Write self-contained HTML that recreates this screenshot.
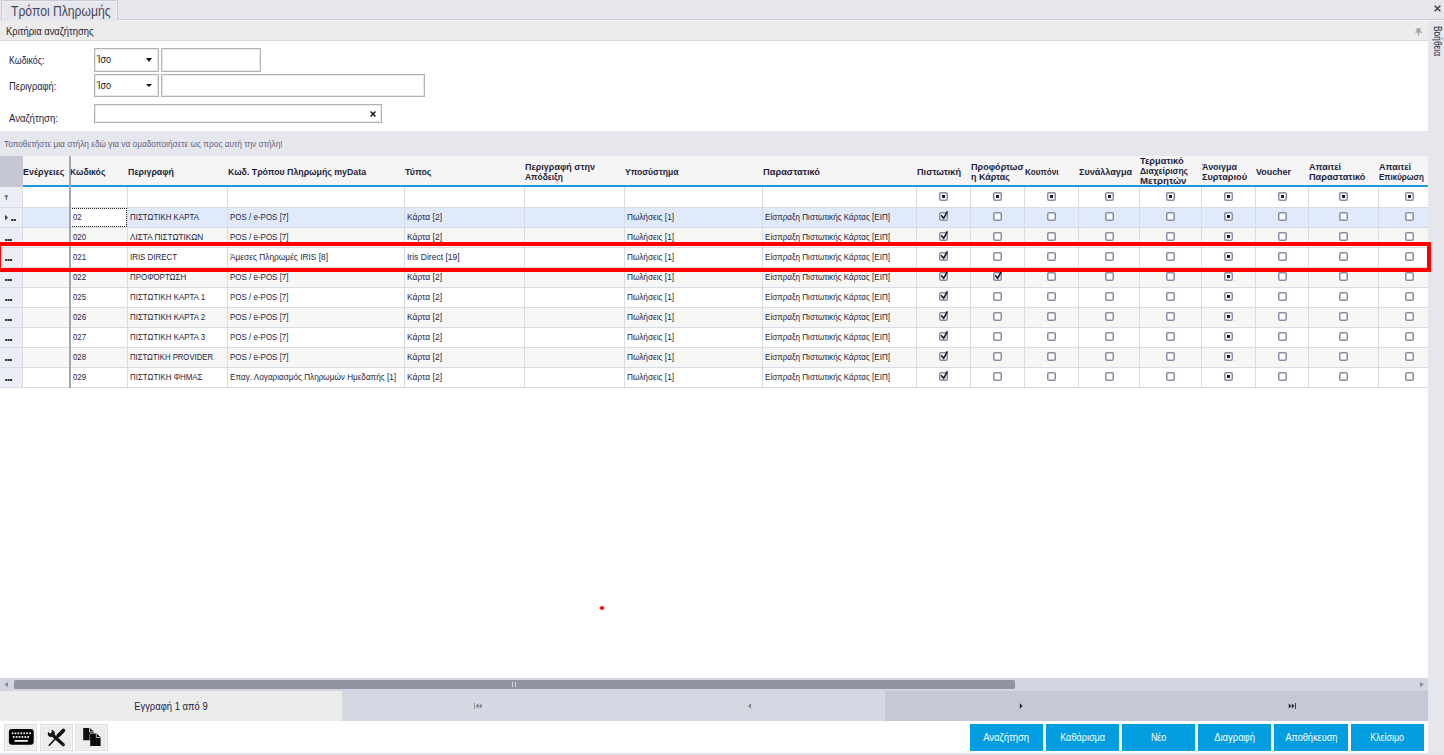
<!DOCTYPE html><html lang="el"><head><meta charset="utf-8"><title>Τρόποι Πληρωμής</title><style>*{box-sizing:border-box;margin:0;padding:0}
html,body{width:1444px;height:755px;overflow:hidden;background:#e6e7ec;font-family:"Liberation Sans",sans-serif;font-size:9px;color:#1e1e3c}
body{position:relative}
.t{display:inline-block;transform-origin:left center;white-space:nowrap}
#tabstrip{position:absolute;left:0;top:0;width:1444px;height:21px;background:#e6e7ec}
#tabstrip .l1{position:absolute;left:0;top:19px;width:1444px;height:1px;background:#c9cbd6}
#tabstrip .l2{position:absolute;left:0;top:20px;width:1444px;height:1px;background:#fafafb}
#tab{position:absolute;left:1px;top:0;width:117px;height:21px;background:#e6e7ec;border:1px solid #c9cbd6;border-bottom:none;box-shadow:inset 1px 1px 0 #eeeff3,inset -1px 0 0 #eeeff3;font-size:14px;line-height:20px;padding-left:9px;color:#46465c;white-space:nowrap}
#closex{position:absolute;left:1434px;top:5px;width:7px;height:7px}
#crit{position:absolute;left:0;top:21px;width:1428px;height:20px;background:#ececea;border-bottom:1px solid #d5d7e0;line-height:21px;padding-left:6px;font-size:10px;color:#1e1e3c}
#critbody{position:absolute;left:0;top:41px;width:1428px;height:90px;background:#fff}
#help{position:absolute;left:1428px;top:21px;width:16px;height:734px;background:#e6e7ec}
#help span.v{position:absolute;left:4px;top:5px;width:10px;height:31px;writing-mode:vertical-rl;font-size:10px;color:#1e1e3c;white-space:nowrap;line-height:10px}
#help span.v .t{transform-origin:center top}
.lbl{position:absolute;font-size:10.5px;line-height:12px;color:#1e1e3c;white-space:nowrap}
.box{position:absolute;background:#fff;border:1px solid #b2b2b2;box-shadow:inset 0 0 0 1px #e8e8e8;font-size:10.5px;line-height:20px;padding-left:2px;color:#111}
.dd{position:absolute;width:0;height:0;border-left:3px solid transparent;border-right:3px solid transparent;border-top:3px solid #111}
#grp{position:absolute;left:0;top:131px;width:1428px;height:25px;background:#e6e7ec;font-size:8.5px;color:#5e6184;line-height:27px;padding-left:4px;white-space:nowrap}
#grid{position:absolute;left:0;top:156px;width:1428px;height:522px;background:#fff;overflow:hidden}
.hdr{position:absolute;left:0;top:0;width:1428px;height:31px;background:#f5f5f5;border-bottom:2px solid #1a9be0;overflow:hidden}
.hc{position:absolute;top:1px;height:30px;font-weight:bold;font-size:9px;color:#1e1e3c;display:flex;align-items:center;padding-left:0;line-height:10px;white-space:nowrap;overflow:hidden}
.hc.n3{top:-1px;height:32px;padding-top:0}
.hc.first{padding-left:0}
.hc.ind{background:#c5c7d3;height:31px;top:0;z-index:2}
.row{position:absolute;left:0;width:1428px;height:20px;background:#fff;border-bottom:1px solid #d9dbe4}
.row.alt{background:#f6f6f4}
.row.sel{background:#e1eafb}
.c{position:absolute;top:0;height:19px;border-left:1px solid #d9dbe4;line-height:19px;padding-left:2px;white-space:nowrap;overflow:hidden;font-size:9px;color:#1e1e3c}
.ci{position:absolute;left:0;top:0;width:22px;height:19px;background:#eceef5}
.c.k{padding-left:0}
.c.foc{background:#fff;outline:1px dotted #222;outline-offset:-1px}
.cb{display:block;position:absolute;left:50%;top:2.4px;width:11px;height:13px;margin-left:-5.5px}
.ci svg{position:absolute;left:0;top:0}
.sep{position:absolute;left:69px;top:0;width:2px;height:232px;background:#a3a5b5}
#redbox{position:absolute;left:-3px;top:242px;width:1434px;height:30px;border:4px solid #fe0000}
#hscroll{position:absolute;left:0;top:678px;width:1428px;height:13px;background:#d3d6e0}
#thumb{position:absolute;left:14px;top:2px;width:1001px;height:9px;background:#9195a1;border-radius:1.5px}
#nav{position:absolute;left:0;top:691px;width:1428px;height:30px;background:#ececea}
#nav .tt{position:absolute;left:0;top:0;width:342px;height:30px;text-align:center;line-height:30px;font-size:10.5px;color:#1e1e3c}
#nav .n1{position:absolute;left:342px;top:0;width:543px;height:30px;background:#d5d8e2}
#nav .n2{position:absolute;left:885px;top:0;width:543px;height:30px;background:#c6c8d5}
#tb{position:absolute;left:0;top:721px;width:1428px;height:32px;background:#fff}
.ib{position:absolute;top:3px;width:33px;height:27px;background:#ececea;box-shadow:inset 0 0 0 1px #dededc,inset 0 0 0 2px #f4f4f2}
.ib svg{position:absolute;left:0;top:0}
.bb{position:absolute;top:3px;width:73px;height:27px;background:#009de0;color:#fff;font-size:10px;text-align:center;line-height:27px;white-space:nowrap}
.bb .t,.tt .t{transform-origin:center center}
#botline{position:absolute;left:0;top:753px;width:1444px;height:2px;background:#e1e2e8}
.c.p3{padding-left:3px}
.row.flt{height:21px}
.row.flt .c{height:20px}
.row.flt .cb{top:3.4px}
.row.flt .ci{height:20px}
.row.flt .ci svg{top:1px}
</style></head><body>
<div id="tabstrip"><div class="l1"></div><div class="l2"></div><div id="tab"><span class="t" style="transform:scaleX(0.868)">Τρόποι Πληρωμής</span></div>
<svg id="closex" viewBox="0 0 7 7"><path d="M0.7 0.7 L6.3 6.3 M6.3 0.7 L0.7 6.3" stroke="#3c3c50" stroke-width="1.5" fill="none"/></svg></div>
<div id="crit"><span class="t" style="transform:scaleX(0.942)">Κριτήρια αναζήτησης</span>
<svg style="position:absolute;left:1415px;top:7px" width="7" height="8" viewBox="0 0 7 8"><path d="M1.5 0.3 H5.5 V3.5 H6.7 V4.7 H0.3 V3.5 H1.5 Z" fill="#9c9eb0"/><path d="M3.5 4.5 V7.7" stroke="#9c9eb0" stroke-width="1"/></svg></div>
<div id="critbody">
<div class="lbl" style="left:9px;top:12.8px"><span class="t" style="transform:scaleX(0.839)">Κωδικός:</span></div>
<div class="box" style="left:94px;top:7px;width:65px;height:24px"><span class="t" style="transform:scaleX(0.856)">Ίσο</span></div><div class="dd" style="left:146px;top:17px;border-top-width:4px"></div>
<div class="box" style="left:161px;top:7px;width:100px;height:24px"></div>
<div class="lbl" style="left:9px;top:38.6px"><span class="t" style="transform:scaleX(0.887)">Περιγραφή:</span></div>
<div class="box" style="left:94px;top:33px;width:65px;height:23px"><span class="t" style="transform:scaleX(0.856)">Ίσο</span></div><div class="dd" style="left:146px;top:43px"></div>
<div class="box" style="left:161px;top:33px;width:264px;height:23px"></div>
<div class="lbl" style="left:9px;top:71px"><span class="t" style="transform:scaleX(0.913)">Αναζήτηση:</span></div>
<div class="box" style="left:94px;top:63px;width:288px;height:19px"></div>
<svg style="position:absolute;left:370px;top:70px" width="6" height="6" viewBox="0 0 6 6"><path d="M0.6 0.6 L5.4 5.4 M5.4 0.6 L0.6 5.4" stroke="#111" stroke-width="1.4" fill="none"/></svg>
</div>
<div id="help"><span class="v"><span class="t" style="transform-origin:center top;transform:scaleY(0.837)">Βοήθεια</span></span></div>
<div id="grp"><span class="t" style="transform:scaleX(0.975)">Τοποθετήστε μια στήλη εδώ για να ομαδοποιήσετε ως προς αυτή την στήλη!</span></div>

<div id="grid">
<div class="hdr">
<div class="hc n1 first" style="left:23px;width:46px"><div><span class="t" style="transform:scaleX(1.003)">Ενέργειες</span></div></div>
<div class="hc n1" style="left:70px;width:57px"><div><span class="t" style="transform:scaleX(0.963)">Κωδικός</span></div></div>
<div class="hc n1" style="left:128px;width:99px"><div><span class="t" style="transform:scaleX(0.981)">Περιγραφή</span></div></div>
<div class="hc n1" style="left:228px;width:176px"><div><span class="t" style="transform:scaleX(0.976)">Κωδ. Τρόπου Πληρωμής myData</span></div></div>
<div class="hc n1" style="left:405px;width:119px"><div><span class="t" style="transform:scaleX(0.985)">Τύπος</span></div></div>
<div class="hc n2" style="left:525px;width:99px"><div><span class="t" style="transform:scaleX(0.999)">Περιγραφή στην</span><br><span class="t" style="transform:scaleX(0.935)">Απόδειξη</span></div></div>
<div class="hc n1" style="left:625px;width:137px"><div><span class="t" style="transform:scaleX(0.951)">Υποσύστημα</span></div></div>
<div class="hc n1" style="left:763px;width:153px"><div><span class="t" style="transform:scaleX(1.030)">Παραστατικό</span></div></div>
<div class="hc n1" style="left:917px;width:53px"><div><span class="t" style="transform:scaleX(1.016)">Πιστωτική</span></div></div>
<div class="hc n2" style="left:971px;width:53px"><div><span class="t" style="transform:scaleX(1.005)">Προφόρτωσ</span><br><span class="t" style="transform:scaleX(0.997)">η Κάρτας</span></div></div>
<div class="hc n1" style="left:1025px;width:53px"><div><span class="t" style="transform:scaleX(0.910)">Κουπόνι</span></div></div>
<div class="hc n1" style="left:1079px;width:60px"><div><span class="t" style="transform:scaleX(1.007)">Συνάλλαγμα</span></div></div>
<div class="hc n3" style="left:1140px;width:61px"><div><span class="t" style="transform:scaleX(1.027)">Τερματικό</span><br><span class="t" style="transform:scaleX(0.944)">Διαχείρισης</span><br><span class="t" style="transform:scaleX(1.076)">Μετρητών</span></div></div>
<div class="hc n2" style="left:1202px;width:53px"><div><span class="t" style="transform:scaleX(0.994)">Άνοιγμα</span><br><span class="t" style="transform:scaleX(1.021)">Συρταριού</span></div></div>
<div class="hc n1" style="left:1256px;width:52px"><div><span class="t" style="transform:scaleX(0.990)">Voucher</span></div></div>
<div class="hc n2" style="left:1309px;width:69px"><div><span class="t" style="transform:scaleX(1.001)">Απαιτεί</span><br><span class="t" style="transform:scaleX(1.019)">Παραστατικό</span></div></div>
<div class="hc n2" style="left:1379px;width:61px"><div><span class="t" style="transform:scaleX(1.001)">Απαιτεί</span><br><span class="t" style="transform:scaleX(0.891)">Επικύρωση</span></div></div>
</div>
<div class="hc ind" style="left:0;width:23px"></div>
<div class="row flt" style="top:31px">
<div class="ci"><svg width="22" height="19" viewBox="0 0 22 19"><path d="M4.6 7.2 H8.2 V8.2 L7 9.6 V12 H5.8 V9.6 L4.6 8.2 Z" fill="#6f7288"/></svg></div>
<div class="c" style="left:22px;width:47px"></div>
<div class="c" style="left:69px;width:58px"></div>
<div class="c" style="left:127px;width:100px"></div>
<div class="c" style="left:227px;width:177px"></div>
<div class="c" style="left:404px;width:120px"></div>
<div class="c" style="left:524px;width:100px"></div>
<div class="c" style="left:624px;width:138px"></div>
<div class="c" style="left:762px;width:154px"></div>
<div class="c k" style="left:916px;width:54px"><svg class="cb" viewBox="0 0 11 13"><rect x="1.75" y="2.75" width="7.5" height="7.5" rx="1.3" fill="#fff" stroke="#8b8ca2" stroke-width="1.5"/><rect x="4" y="5" width="3" height="3" fill="#1c1c30"/></svg></div>
<div class="c k" style="left:970px;width:54px"><svg class="cb" viewBox="0 0 11 13"><rect x="1.75" y="2.75" width="7.5" height="7.5" rx="1.3" fill="#fff" stroke="#8b8ca2" stroke-width="1.5"/><rect x="4" y="5" width="3" height="3" fill="#1c1c30"/></svg></div>
<div class="c k" style="left:1024px;width:54px"><svg class="cb" viewBox="0 0 11 13"><rect x="1.75" y="2.75" width="7.5" height="7.5" rx="1.3" fill="#fff" stroke="#8b8ca2" stroke-width="1.5"/><rect x="4" y="5" width="3" height="3" fill="#1c1c30"/></svg></div>
<div class="c k" style="left:1078px;width:61px"><svg class="cb" viewBox="0 0 11 13"><rect x="1.75" y="2.75" width="7.5" height="7.5" rx="1.3" fill="#fff" stroke="#8b8ca2" stroke-width="1.5"/><rect x="4" y="5" width="3" height="3" fill="#1c1c30"/></svg></div>
<div class="c k" style="left:1139px;width:62px"><svg class="cb" viewBox="0 0 11 13"><rect x="1.75" y="2.75" width="7.5" height="7.5" rx="1.3" fill="#fff" stroke="#8b8ca2" stroke-width="1.5"/><rect x="4" y="5" width="3" height="3" fill="#1c1c30"/></svg></div>
<div class="c k" style="left:1201px;width:54px"><svg class="cb" viewBox="0 0 11 13"><rect x="1.75" y="2.75" width="7.5" height="7.5" rx="1.3" fill="#fff" stroke="#8b8ca2" stroke-width="1.5"/><rect x="4" y="5" width="3" height="3" fill="#1c1c30"/></svg></div>
<div class="c k" style="left:1255px;width:53px"><svg class="cb" viewBox="0 0 11 13"><rect x="1.75" y="2.75" width="7.5" height="7.5" rx="1.3" fill="#fff" stroke="#8b8ca2" stroke-width="1.5"/><rect x="4" y="5" width="3" height="3" fill="#1c1c30"/></svg></div>
<div class="c k" style="left:1308px;width:70px"><svg class="cb" viewBox="0 0 11 13"><rect x="1.75" y="2.75" width="7.5" height="7.5" rx="1.3" fill="#fff" stroke="#8b8ca2" stroke-width="1.5"/><rect x="4" y="5" width="3" height="3" fill="#1c1c30"/></svg></div>
<div class="c k" style="left:1378px;width:62px"><svg class="cb" viewBox="0 0 11 13"><rect x="1.75" y="2.75" width="7.5" height="7.5" rx="1.3" fill="#fff" stroke="#8b8ca2" stroke-width="1.5"/><rect x="4" y="5" width="3" height="3" fill="#1c1c30"/></svg></div>
</div>
<div class="row sel" style="top:52px">
<div class="ci"><svg width="22" height="19" viewBox="0 0 22 19"><path d="M5 6.7 V12.3 L8 9.5 Z" fill="#3a3a50"/><rect x="11.3" y="11" width="2" height="2" fill="#2a2a3e"/><rect x="13.8" y="11" width="2" height="2" fill="#2a2a3e"/></svg></div>
<div class="c" style="left:22px;width:47px"></div>
<div class="c p3 foc" style="left:69px;width:58px"><span class="t" style="transform:scaleX(0.869)">02</span></div>
<div class="c" style="left:127px;width:100px"><span class="t" style="transform:scaleX(0.879)">ΠΙΣΤΩΤΙΚΗ ΚΑΡΤΑ</span></div>
<div class="c" style="left:227px;width:177px"><span class="t" style="transform:scaleX(0.886)">POS / e-POS [7]</span></div>
<div class="c" style="left:404px;width:120px"><span class="t" style="transform:scaleX(0.940)">Κάρτα [2]</span></div>
<div class="c" style="left:524px;width:100px"></div>
<div class="c" style="left:624px;width:138px"><span class="t" style="transform:scaleX(0.917)">Πωλήσεις [1]</span></div>
<div class="c" style="left:762px;width:154px"><span class="t" style="transform:scaleX(0.896)">Είσπραξη Πιστωτικής Κάρτας [ΕΙΠ]</span></div>
<div class="c k" style="left:916px;width:54px"><svg class="cb" viewBox="0 0 11 13"><rect x="1.75" y="2.75" width="7.5" height="7.5" rx="1.3" fill="#fff" stroke="#8b8ca2" stroke-width="1.5"/><path d="M3.2 5.3 L5.7 8.3 L9.4 1.3" fill="none" stroke="#1c1c30" stroke-width="1.7"/></svg></div>
<div class="c k" style="left:970px;width:54px"><svg class="cb" viewBox="0 0 11 13"><rect x="1.75" y="2.75" width="7.5" height="7.5" rx="1.3" fill="#fff" stroke="#8b8ca2" stroke-width="1.5"/></svg></div>
<div class="c k" style="left:1024px;width:54px"><svg class="cb" viewBox="0 0 11 13"><rect x="1.75" y="2.75" width="7.5" height="7.5" rx="1.3" fill="#fff" stroke="#8b8ca2" stroke-width="1.5"/></svg></div>
<div class="c k" style="left:1078px;width:61px"><svg class="cb" viewBox="0 0 11 13"><rect x="1.75" y="2.75" width="7.5" height="7.5" rx="1.3" fill="#fff" stroke="#8b8ca2" stroke-width="1.5"/></svg></div>
<div class="c k" style="left:1139px;width:62px"><svg class="cb" viewBox="0 0 11 13"><rect x="1.75" y="2.75" width="7.5" height="7.5" rx="1.3" fill="#fff" stroke="#8b8ca2" stroke-width="1.5"/></svg></div>
<div class="c k" style="left:1201px;width:54px"><svg class="cb" viewBox="0 0 11 13"><rect x="1.75" y="2.75" width="7.5" height="7.5" rx="1.3" fill="#fff" stroke="#8b8ca2" stroke-width="1.5"/><rect x="4" y="5" width="3" height="3" fill="#1c1c30"/></svg></div>
<div class="c k" style="left:1255px;width:53px"><svg class="cb" viewBox="0 0 11 13"><rect x="1.75" y="2.75" width="7.5" height="7.5" rx="1.3" fill="#fff" stroke="#8b8ca2" stroke-width="1.5"/></svg></div>
<div class="c k" style="left:1308px;width:70px"><svg class="cb" viewBox="0 0 11 13"><rect x="1.75" y="2.75" width="7.5" height="7.5" rx="1.3" fill="#fff" stroke="#8b8ca2" stroke-width="1.5"/></svg></div>
<div class="c k" style="left:1378px;width:62px"><svg class="cb" viewBox="0 0 11 13"><rect x="1.75" y="2.75" width="7.5" height="7.5" rx="1.3" fill="#fff" stroke="#8b8ca2" stroke-width="1.5"/></svg></div>
</div>
<div class="row alt" style="top:72px">
<div class="ci"><svg width="22" height="19" viewBox="0 0 22 19"><rect x="5.2" y="11" width="2" height="2" fill="#2a2a3e"/><rect x="7.6" y="11" width="2" height="2" fill="#2a2a3e"/><rect x="10" y="11" width="2" height="2" fill="#2a2a3e"/></svg></div>
<div class="c" style="left:22px;width:47px"></div>
<div class="c p3" style="left:69px;width:58px"><span class="t" style="transform:scaleX(0.865)">020</span></div>
<div class="c" style="left:127px;width:100px"><span class="t" style="transform:scaleX(0.907)">ΛΙΣΤΑ ΠΙΣΤΩΤΙΚΩΝ</span></div>
<div class="c" style="left:227px;width:177px"><span class="t" style="transform:scaleX(0.886)">POS / e-POS [7]</span></div>
<div class="c" style="left:404px;width:120px"><span class="t" style="transform:scaleX(0.940)">Κάρτα [2]</span></div>
<div class="c" style="left:524px;width:100px"></div>
<div class="c" style="left:624px;width:138px"><span class="t" style="transform:scaleX(0.917)">Πωλήσεις [1]</span></div>
<div class="c" style="left:762px;width:154px"><span class="t" style="transform:scaleX(0.896)">Είσπραξη Πιστωτικής Κάρτας [ΕΙΠ]</span></div>
<div class="c k" style="left:916px;width:54px"><svg class="cb" viewBox="0 0 11 13"><rect x="1.75" y="2.75" width="7.5" height="7.5" rx="1.3" fill="#fff" stroke="#8b8ca2" stroke-width="1.5"/><path d="M3.2 5.3 L5.7 8.3 L9.4 1.3" fill="none" stroke="#1c1c30" stroke-width="1.7"/></svg></div>
<div class="c k" style="left:970px;width:54px"><svg class="cb" viewBox="0 0 11 13"><rect x="1.75" y="2.75" width="7.5" height="7.5" rx="1.3" fill="#fff" stroke="#8b8ca2" stroke-width="1.5"/></svg></div>
<div class="c k" style="left:1024px;width:54px"><svg class="cb" viewBox="0 0 11 13"><rect x="1.75" y="2.75" width="7.5" height="7.5" rx="1.3" fill="#fff" stroke="#8b8ca2" stroke-width="1.5"/></svg></div>
<div class="c k" style="left:1078px;width:61px"><svg class="cb" viewBox="0 0 11 13"><rect x="1.75" y="2.75" width="7.5" height="7.5" rx="1.3" fill="#fff" stroke="#8b8ca2" stroke-width="1.5"/></svg></div>
<div class="c k" style="left:1139px;width:62px"><svg class="cb" viewBox="0 0 11 13"><rect x="1.75" y="2.75" width="7.5" height="7.5" rx="1.3" fill="#fff" stroke="#8b8ca2" stroke-width="1.5"/></svg></div>
<div class="c k" style="left:1201px;width:54px"><svg class="cb" viewBox="0 0 11 13"><rect x="1.75" y="2.75" width="7.5" height="7.5" rx="1.3" fill="#fff" stroke="#8b8ca2" stroke-width="1.5"/><rect x="4" y="5" width="3" height="3" fill="#1c1c30"/></svg></div>
<div class="c k" style="left:1255px;width:53px"><svg class="cb" viewBox="0 0 11 13"><rect x="1.75" y="2.75" width="7.5" height="7.5" rx="1.3" fill="#fff" stroke="#8b8ca2" stroke-width="1.5"/></svg></div>
<div class="c k" style="left:1308px;width:70px"><svg class="cb" viewBox="0 0 11 13"><rect x="1.75" y="2.75" width="7.5" height="7.5" rx="1.3" fill="#fff" stroke="#8b8ca2" stroke-width="1.5"/></svg></div>
<div class="c k" style="left:1378px;width:62px"><svg class="cb" viewBox="0 0 11 13"><rect x="1.75" y="2.75" width="7.5" height="7.5" rx="1.3" fill="#fff" stroke="#8b8ca2" stroke-width="1.5"/></svg></div>
</div>
<div class="row" style="top:92px">
<div class="ci"><svg width="22" height="19" viewBox="0 0 22 19"><rect x="5.2" y="11" width="2" height="2" fill="#2a2a3e"/><rect x="7.6" y="11" width="2" height="2" fill="#2a2a3e"/><rect x="10" y="11" width="2" height="2" fill="#2a2a3e"/></svg></div>
<div class="c" style="left:22px;width:47px"></div>
<div class="c p3" style="left:69px;width:58px"><span class="t" style="transform:scaleX(0.865)">021</span></div>
<div class="c" style="left:127px;width:100px"><span class="t" style="transform:scaleX(0.880)">IRIS DIRECT</span></div>
<div class="c" style="left:227px;width:177px"><span class="t" style="transform:scaleX(0.926)">Άμεσες Πληρωμές IRIS [8]</span></div>
<div class="c" style="left:404px;width:120px"><span class="t" style="transform:scaleX(0.949)">Iris Direct [19]</span></div>
<div class="c" style="left:524px;width:100px"></div>
<div class="c" style="left:624px;width:138px"><span class="t" style="transform:scaleX(0.917)">Πωλήσεις [1]</span></div>
<div class="c" style="left:762px;width:154px"><span class="t" style="transform:scaleX(0.896)">Είσπραξη Πιστωτικής Κάρτας [ΕΙΠ]</span></div>
<div class="c k" style="left:916px;width:54px"><svg class="cb" viewBox="0 0 11 13"><rect x="1.75" y="2.75" width="7.5" height="7.5" rx="1.3" fill="#fff" stroke="#8b8ca2" stroke-width="1.5"/><path d="M3.2 5.3 L5.7 8.3 L9.4 1.3" fill="none" stroke="#1c1c30" stroke-width="1.7"/></svg></div>
<div class="c k" style="left:970px;width:54px"><svg class="cb" viewBox="0 0 11 13"><rect x="1.75" y="2.75" width="7.5" height="7.5" rx="1.3" fill="#fff" stroke="#8b8ca2" stroke-width="1.5"/></svg></div>
<div class="c k" style="left:1024px;width:54px"><svg class="cb" viewBox="0 0 11 13"><rect x="1.75" y="2.75" width="7.5" height="7.5" rx="1.3" fill="#fff" stroke="#8b8ca2" stroke-width="1.5"/></svg></div>
<div class="c k" style="left:1078px;width:61px"><svg class="cb" viewBox="0 0 11 13"><rect x="1.75" y="2.75" width="7.5" height="7.5" rx="1.3" fill="#fff" stroke="#8b8ca2" stroke-width="1.5"/></svg></div>
<div class="c k" style="left:1139px;width:62px"><svg class="cb" viewBox="0 0 11 13"><rect x="1.75" y="2.75" width="7.5" height="7.5" rx="1.3" fill="#fff" stroke="#8b8ca2" stroke-width="1.5"/></svg></div>
<div class="c k" style="left:1201px;width:54px"><svg class="cb" viewBox="0 0 11 13"><rect x="1.75" y="2.75" width="7.5" height="7.5" rx="1.3" fill="#fff" stroke="#8b8ca2" stroke-width="1.5"/><rect x="4" y="5" width="3" height="3" fill="#1c1c30"/></svg></div>
<div class="c k" style="left:1255px;width:53px"><svg class="cb" viewBox="0 0 11 13"><rect x="1.75" y="2.75" width="7.5" height="7.5" rx="1.3" fill="#fff" stroke="#8b8ca2" stroke-width="1.5"/></svg></div>
<div class="c k" style="left:1308px;width:70px"><svg class="cb" viewBox="0 0 11 13"><rect x="1.75" y="2.75" width="7.5" height="7.5" rx="1.3" fill="#fff" stroke="#8b8ca2" stroke-width="1.5"/></svg></div>
<div class="c k" style="left:1378px;width:62px"><svg class="cb" viewBox="0 0 11 13"><rect x="1.75" y="2.75" width="7.5" height="7.5" rx="1.3" fill="#fff" stroke="#8b8ca2" stroke-width="1.5"/></svg></div>
</div>
<div class="row alt" style="top:112px">
<div class="ci"><svg width="22" height="19" viewBox="0 0 22 19"><rect x="5.2" y="11" width="2" height="2" fill="#2a2a3e"/><rect x="7.6" y="11" width="2" height="2" fill="#2a2a3e"/><rect x="10" y="11" width="2" height="2" fill="#2a2a3e"/></svg></div>
<div class="c" style="left:22px;width:47px"></div>
<div class="c p3" style="left:69px;width:58px"><span class="t" style="transform:scaleX(0.865)">022</span></div>
<div class="c" style="left:127px;width:100px"><span class="t" style="transform:scaleX(0.880)">ΠΡΟΦΌΡΤΩΣΗ</span></div>
<div class="c" style="left:227px;width:177px"><span class="t" style="transform:scaleX(0.886)">POS / e-POS [7]</span></div>
<div class="c" style="left:404px;width:120px"><span class="t" style="transform:scaleX(0.940)">Κάρτα [2]</span></div>
<div class="c" style="left:524px;width:100px"></div>
<div class="c" style="left:624px;width:138px"><span class="t" style="transform:scaleX(0.917)">Πωλήσεις [1]</span></div>
<div class="c" style="left:762px;width:154px"><span class="t" style="transform:scaleX(0.896)">Είσπραξη Πιστωτικής Κάρτας [ΕΙΠ]</span></div>
<div class="c k" style="left:916px;width:54px"><svg class="cb" viewBox="0 0 11 13"><rect x="1.75" y="2.75" width="7.5" height="7.5" rx="1.3" fill="#fff" stroke="#8b8ca2" stroke-width="1.5"/><path d="M3.2 5.3 L5.7 8.3 L9.4 1.3" fill="none" stroke="#1c1c30" stroke-width="1.7"/></svg></div>
<div class="c k" style="left:970px;width:54px"><svg class="cb" viewBox="0 0 11 13"><rect x="1.75" y="2.75" width="7.5" height="7.5" rx="1.3" fill="#fff" stroke="#8b8ca2" stroke-width="1.5"/><path d="M3.2 5.3 L5.7 8.3 L9.4 1.3" fill="none" stroke="#1c1c30" stroke-width="1.7"/></svg></div>
<div class="c k" style="left:1024px;width:54px"><svg class="cb" viewBox="0 0 11 13"><rect x="1.75" y="2.75" width="7.5" height="7.5" rx="1.3" fill="#fff" stroke="#8b8ca2" stroke-width="1.5"/></svg></div>
<div class="c k" style="left:1078px;width:61px"><svg class="cb" viewBox="0 0 11 13"><rect x="1.75" y="2.75" width="7.5" height="7.5" rx="1.3" fill="#fff" stroke="#8b8ca2" stroke-width="1.5"/></svg></div>
<div class="c k" style="left:1139px;width:62px"><svg class="cb" viewBox="0 0 11 13"><rect x="1.75" y="2.75" width="7.5" height="7.5" rx="1.3" fill="#fff" stroke="#8b8ca2" stroke-width="1.5"/></svg></div>
<div class="c k" style="left:1201px;width:54px"><svg class="cb" viewBox="0 0 11 13"><rect x="1.75" y="2.75" width="7.5" height="7.5" rx="1.3" fill="#fff" stroke="#8b8ca2" stroke-width="1.5"/><rect x="4" y="5" width="3" height="3" fill="#1c1c30"/></svg></div>
<div class="c k" style="left:1255px;width:53px"><svg class="cb" viewBox="0 0 11 13"><rect x="1.75" y="2.75" width="7.5" height="7.5" rx="1.3" fill="#fff" stroke="#8b8ca2" stroke-width="1.5"/></svg></div>
<div class="c k" style="left:1308px;width:70px"><svg class="cb" viewBox="0 0 11 13"><rect x="1.75" y="2.75" width="7.5" height="7.5" rx="1.3" fill="#fff" stroke="#8b8ca2" stroke-width="1.5"/></svg></div>
<div class="c k" style="left:1378px;width:62px"><svg class="cb" viewBox="0 0 11 13"><rect x="1.75" y="2.75" width="7.5" height="7.5" rx="1.3" fill="#fff" stroke="#8b8ca2" stroke-width="1.5"/></svg></div>
</div>
<div class="row" style="top:132px">
<div class="ci"><svg width="22" height="19" viewBox="0 0 22 19"><rect x="5.2" y="11" width="2" height="2" fill="#2a2a3e"/><rect x="7.6" y="11" width="2" height="2" fill="#2a2a3e"/><rect x="10" y="11" width="2" height="2" fill="#2a2a3e"/></svg></div>
<div class="c" style="left:22px;width:47px"></div>
<div class="c p3" style="left:69px;width:58px"><span class="t" style="transform:scaleX(0.865)">025</span></div>
<div class="c" style="left:127px;width:100px"><span class="t" style="transform:scaleX(0.880)">ΠΙΣΤΩΤΙΚΗ ΚΑΡΤΑ 1</span></div>
<div class="c" style="left:227px;width:177px"><span class="t" style="transform:scaleX(0.886)">POS / e-POS [7]</span></div>
<div class="c" style="left:404px;width:120px"><span class="t" style="transform:scaleX(0.940)">Κάρτα [2]</span></div>
<div class="c" style="left:524px;width:100px"></div>
<div class="c" style="left:624px;width:138px"><span class="t" style="transform:scaleX(0.917)">Πωλήσεις [1]</span></div>
<div class="c" style="left:762px;width:154px"><span class="t" style="transform:scaleX(0.896)">Είσπραξη Πιστωτικής Κάρτας [ΕΙΠ]</span></div>
<div class="c k" style="left:916px;width:54px"><svg class="cb" viewBox="0 0 11 13"><rect x="1.75" y="2.75" width="7.5" height="7.5" rx="1.3" fill="#fff" stroke="#8b8ca2" stroke-width="1.5"/><path d="M3.2 5.3 L5.7 8.3 L9.4 1.3" fill="none" stroke="#1c1c30" stroke-width="1.7"/></svg></div>
<div class="c k" style="left:970px;width:54px"><svg class="cb" viewBox="0 0 11 13"><rect x="1.75" y="2.75" width="7.5" height="7.5" rx="1.3" fill="#fff" stroke="#8b8ca2" stroke-width="1.5"/></svg></div>
<div class="c k" style="left:1024px;width:54px"><svg class="cb" viewBox="0 0 11 13"><rect x="1.75" y="2.75" width="7.5" height="7.5" rx="1.3" fill="#fff" stroke="#8b8ca2" stroke-width="1.5"/></svg></div>
<div class="c k" style="left:1078px;width:61px"><svg class="cb" viewBox="0 0 11 13"><rect x="1.75" y="2.75" width="7.5" height="7.5" rx="1.3" fill="#fff" stroke="#8b8ca2" stroke-width="1.5"/></svg></div>
<div class="c k" style="left:1139px;width:62px"><svg class="cb" viewBox="0 0 11 13"><rect x="1.75" y="2.75" width="7.5" height="7.5" rx="1.3" fill="#fff" stroke="#8b8ca2" stroke-width="1.5"/></svg></div>
<div class="c k" style="left:1201px;width:54px"><svg class="cb" viewBox="0 0 11 13"><rect x="1.75" y="2.75" width="7.5" height="7.5" rx="1.3" fill="#fff" stroke="#8b8ca2" stroke-width="1.5"/><rect x="4" y="5" width="3" height="3" fill="#1c1c30"/></svg></div>
<div class="c k" style="left:1255px;width:53px"><svg class="cb" viewBox="0 0 11 13"><rect x="1.75" y="2.75" width="7.5" height="7.5" rx="1.3" fill="#fff" stroke="#8b8ca2" stroke-width="1.5"/></svg></div>
<div class="c k" style="left:1308px;width:70px"><svg class="cb" viewBox="0 0 11 13"><rect x="1.75" y="2.75" width="7.5" height="7.5" rx="1.3" fill="#fff" stroke="#8b8ca2" stroke-width="1.5"/></svg></div>
<div class="c k" style="left:1378px;width:62px"><svg class="cb" viewBox="0 0 11 13"><rect x="1.75" y="2.75" width="7.5" height="7.5" rx="1.3" fill="#fff" stroke="#8b8ca2" stroke-width="1.5"/></svg></div>
</div>
<div class="row alt" style="top:152px">
<div class="ci"><svg width="22" height="19" viewBox="0 0 22 19"><rect x="5.2" y="11" width="2" height="2" fill="#2a2a3e"/><rect x="7.6" y="11" width="2" height="2" fill="#2a2a3e"/><rect x="10" y="11" width="2" height="2" fill="#2a2a3e"/></svg></div>
<div class="c" style="left:22px;width:47px"></div>
<div class="c p3" style="left:69px;width:58px"><span class="t" style="transform:scaleX(0.865)">026</span></div>
<div class="c" style="left:127px;width:100px"><span class="t" style="transform:scaleX(0.880)">ΠΙΣΤΩΤΙΚΗ ΚΑΡΤΑ 2</span></div>
<div class="c" style="left:227px;width:177px"><span class="t" style="transform:scaleX(0.886)">POS / e-POS [7]</span></div>
<div class="c" style="left:404px;width:120px"><span class="t" style="transform:scaleX(0.940)">Κάρτα [2]</span></div>
<div class="c" style="left:524px;width:100px"></div>
<div class="c" style="left:624px;width:138px"><span class="t" style="transform:scaleX(0.917)">Πωλήσεις [1]</span></div>
<div class="c" style="left:762px;width:154px"><span class="t" style="transform:scaleX(0.896)">Είσπραξη Πιστωτικής Κάρτας [ΕΙΠ]</span></div>
<div class="c k" style="left:916px;width:54px"><svg class="cb" viewBox="0 0 11 13"><rect x="1.75" y="2.75" width="7.5" height="7.5" rx="1.3" fill="#fff" stroke="#8b8ca2" stroke-width="1.5"/><path d="M3.2 5.3 L5.7 8.3 L9.4 1.3" fill="none" stroke="#1c1c30" stroke-width="1.7"/></svg></div>
<div class="c k" style="left:970px;width:54px"><svg class="cb" viewBox="0 0 11 13"><rect x="1.75" y="2.75" width="7.5" height="7.5" rx="1.3" fill="#fff" stroke="#8b8ca2" stroke-width="1.5"/></svg></div>
<div class="c k" style="left:1024px;width:54px"><svg class="cb" viewBox="0 0 11 13"><rect x="1.75" y="2.75" width="7.5" height="7.5" rx="1.3" fill="#fff" stroke="#8b8ca2" stroke-width="1.5"/></svg></div>
<div class="c k" style="left:1078px;width:61px"><svg class="cb" viewBox="0 0 11 13"><rect x="1.75" y="2.75" width="7.5" height="7.5" rx="1.3" fill="#fff" stroke="#8b8ca2" stroke-width="1.5"/></svg></div>
<div class="c k" style="left:1139px;width:62px"><svg class="cb" viewBox="0 0 11 13"><rect x="1.75" y="2.75" width="7.5" height="7.5" rx="1.3" fill="#fff" stroke="#8b8ca2" stroke-width="1.5"/></svg></div>
<div class="c k" style="left:1201px;width:54px"><svg class="cb" viewBox="0 0 11 13"><rect x="1.75" y="2.75" width="7.5" height="7.5" rx="1.3" fill="#fff" stroke="#8b8ca2" stroke-width="1.5"/><rect x="4" y="5" width="3" height="3" fill="#1c1c30"/></svg></div>
<div class="c k" style="left:1255px;width:53px"><svg class="cb" viewBox="0 0 11 13"><rect x="1.75" y="2.75" width="7.5" height="7.5" rx="1.3" fill="#fff" stroke="#8b8ca2" stroke-width="1.5"/></svg></div>
<div class="c k" style="left:1308px;width:70px"><svg class="cb" viewBox="0 0 11 13"><rect x="1.75" y="2.75" width="7.5" height="7.5" rx="1.3" fill="#fff" stroke="#8b8ca2" stroke-width="1.5"/></svg></div>
<div class="c k" style="left:1378px;width:62px"><svg class="cb" viewBox="0 0 11 13"><rect x="1.75" y="2.75" width="7.5" height="7.5" rx="1.3" fill="#fff" stroke="#8b8ca2" stroke-width="1.5"/></svg></div>
</div>
<div class="row" style="top:172px">
<div class="ci"><svg width="22" height="19" viewBox="0 0 22 19"><rect x="5.2" y="11" width="2" height="2" fill="#2a2a3e"/><rect x="7.6" y="11" width="2" height="2" fill="#2a2a3e"/><rect x="10" y="11" width="2" height="2" fill="#2a2a3e"/></svg></div>
<div class="c" style="left:22px;width:47px"></div>
<div class="c p3" style="left:69px;width:58px"><span class="t" style="transform:scaleX(0.865)">027</span></div>
<div class="c" style="left:127px;width:100px"><span class="t" style="transform:scaleX(0.880)">ΠΙΣΤΩΤΙΚΗ ΚΑΡΤΑ 3</span></div>
<div class="c" style="left:227px;width:177px"><span class="t" style="transform:scaleX(0.886)">POS / e-POS [7]</span></div>
<div class="c" style="left:404px;width:120px"><span class="t" style="transform:scaleX(0.940)">Κάρτα [2]</span></div>
<div class="c" style="left:524px;width:100px"></div>
<div class="c" style="left:624px;width:138px"><span class="t" style="transform:scaleX(0.917)">Πωλήσεις [1]</span></div>
<div class="c" style="left:762px;width:154px"><span class="t" style="transform:scaleX(0.896)">Είσπραξη Πιστωτικής Κάρτας [ΕΙΠ]</span></div>
<div class="c k" style="left:916px;width:54px"><svg class="cb" viewBox="0 0 11 13"><rect x="1.75" y="2.75" width="7.5" height="7.5" rx="1.3" fill="#fff" stroke="#8b8ca2" stroke-width="1.5"/><path d="M3.2 5.3 L5.7 8.3 L9.4 1.3" fill="none" stroke="#1c1c30" stroke-width="1.7"/></svg></div>
<div class="c k" style="left:970px;width:54px"><svg class="cb" viewBox="0 0 11 13"><rect x="1.75" y="2.75" width="7.5" height="7.5" rx="1.3" fill="#fff" stroke="#8b8ca2" stroke-width="1.5"/></svg></div>
<div class="c k" style="left:1024px;width:54px"><svg class="cb" viewBox="0 0 11 13"><rect x="1.75" y="2.75" width="7.5" height="7.5" rx="1.3" fill="#fff" stroke="#8b8ca2" stroke-width="1.5"/></svg></div>
<div class="c k" style="left:1078px;width:61px"><svg class="cb" viewBox="0 0 11 13"><rect x="1.75" y="2.75" width="7.5" height="7.5" rx="1.3" fill="#fff" stroke="#8b8ca2" stroke-width="1.5"/></svg></div>
<div class="c k" style="left:1139px;width:62px"><svg class="cb" viewBox="0 0 11 13"><rect x="1.75" y="2.75" width="7.5" height="7.5" rx="1.3" fill="#fff" stroke="#8b8ca2" stroke-width="1.5"/></svg></div>
<div class="c k" style="left:1201px;width:54px"><svg class="cb" viewBox="0 0 11 13"><rect x="1.75" y="2.75" width="7.5" height="7.5" rx="1.3" fill="#fff" stroke="#8b8ca2" stroke-width="1.5"/><rect x="4" y="5" width="3" height="3" fill="#1c1c30"/></svg></div>
<div class="c k" style="left:1255px;width:53px"><svg class="cb" viewBox="0 0 11 13"><rect x="1.75" y="2.75" width="7.5" height="7.5" rx="1.3" fill="#fff" stroke="#8b8ca2" stroke-width="1.5"/></svg></div>
<div class="c k" style="left:1308px;width:70px"><svg class="cb" viewBox="0 0 11 13"><rect x="1.75" y="2.75" width="7.5" height="7.5" rx="1.3" fill="#fff" stroke="#8b8ca2" stroke-width="1.5"/></svg></div>
<div class="c k" style="left:1378px;width:62px"><svg class="cb" viewBox="0 0 11 13"><rect x="1.75" y="2.75" width="7.5" height="7.5" rx="1.3" fill="#fff" stroke="#8b8ca2" stroke-width="1.5"/></svg></div>
</div>
<div class="row alt" style="top:192px">
<div class="ci"><svg width="22" height="19" viewBox="0 0 22 19"><rect x="5.2" y="11" width="2" height="2" fill="#2a2a3e"/><rect x="7.6" y="11" width="2" height="2" fill="#2a2a3e"/><rect x="10" y="11" width="2" height="2" fill="#2a2a3e"/></svg></div>
<div class="c" style="left:22px;width:47px"></div>
<div class="c p3" style="left:69px;width:58px"><span class="t" style="transform:scaleX(0.865)">028</span></div>
<div class="c" style="left:127px;width:100px"><span class="t" style="transform:scaleX(0.859)">ΠΙΣΤΩΤΙΚΗ PROVIDER</span></div>
<div class="c" style="left:227px;width:177px"><span class="t" style="transform:scaleX(0.886)">POS / e-POS [7]</span></div>
<div class="c" style="left:404px;width:120px"><span class="t" style="transform:scaleX(0.940)">Κάρτα [2]</span></div>
<div class="c" style="left:524px;width:100px"></div>
<div class="c" style="left:624px;width:138px"><span class="t" style="transform:scaleX(0.917)">Πωλήσεις [1]</span></div>
<div class="c" style="left:762px;width:154px"><span class="t" style="transform:scaleX(0.896)">Είσπραξη Πιστωτικής Κάρτας [ΕΙΠ]</span></div>
<div class="c k" style="left:916px;width:54px"><svg class="cb" viewBox="0 0 11 13"><rect x="1.75" y="2.75" width="7.5" height="7.5" rx="1.3" fill="#fff" stroke="#8b8ca2" stroke-width="1.5"/><path d="M3.2 5.3 L5.7 8.3 L9.4 1.3" fill="none" stroke="#1c1c30" stroke-width="1.7"/></svg></div>
<div class="c k" style="left:970px;width:54px"><svg class="cb" viewBox="0 0 11 13"><rect x="1.75" y="2.75" width="7.5" height="7.5" rx="1.3" fill="#fff" stroke="#8b8ca2" stroke-width="1.5"/></svg></div>
<div class="c k" style="left:1024px;width:54px"><svg class="cb" viewBox="0 0 11 13"><rect x="1.75" y="2.75" width="7.5" height="7.5" rx="1.3" fill="#fff" stroke="#8b8ca2" stroke-width="1.5"/></svg></div>
<div class="c k" style="left:1078px;width:61px"><svg class="cb" viewBox="0 0 11 13"><rect x="1.75" y="2.75" width="7.5" height="7.5" rx="1.3" fill="#fff" stroke="#8b8ca2" stroke-width="1.5"/></svg></div>
<div class="c k" style="left:1139px;width:62px"><svg class="cb" viewBox="0 0 11 13"><rect x="1.75" y="2.75" width="7.5" height="7.5" rx="1.3" fill="#fff" stroke="#8b8ca2" stroke-width="1.5"/></svg></div>
<div class="c k" style="left:1201px;width:54px"><svg class="cb" viewBox="0 0 11 13"><rect x="1.75" y="2.75" width="7.5" height="7.5" rx="1.3" fill="#fff" stroke="#8b8ca2" stroke-width="1.5"/><rect x="4" y="5" width="3" height="3" fill="#1c1c30"/></svg></div>
<div class="c k" style="left:1255px;width:53px"><svg class="cb" viewBox="0 0 11 13"><rect x="1.75" y="2.75" width="7.5" height="7.5" rx="1.3" fill="#fff" stroke="#8b8ca2" stroke-width="1.5"/></svg></div>
<div class="c k" style="left:1308px;width:70px"><svg class="cb" viewBox="0 0 11 13"><rect x="1.75" y="2.75" width="7.5" height="7.5" rx="1.3" fill="#fff" stroke="#8b8ca2" stroke-width="1.5"/></svg></div>
<div class="c k" style="left:1378px;width:62px"><svg class="cb" viewBox="0 0 11 13"><rect x="1.75" y="2.75" width="7.5" height="7.5" rx="1.3" fill="#fff" stroke="#8b8ca2" stroke-width="1.5"/></svg></div>
</div>
<div class="row" style="top:212px">
<div class="ci"><svg width="22" height="19" viewBox="0 0 22 19"><rect x="5.2" y="11" width="2" height="2" fill="#2a2a3e"/><rect x="7.6" y="11" width="2" height="2" fill="#2a2a3e"/><rect x="10" y="11" width="2" height="2" fill="#2a2a3e"/></svg></div>
<div class="c" style="left:22px;width:47px"></div>
<div class="c p3" style="left:69px;width:58px"><span class="t" style="transform:scaleX(0.865)">029</span></div>
<div class="c" style="left:127px;width:100px"><span class="t" style="transform:scaleX(0.880)">ΠΙΣΤΩΤΙΚΗ ΦΗΜΑΣ</span></div>
<div class="c" style="left:227px;width:177px"><span class="t" style="transform:scaleX(0.906)">Επαγ. Λογαριασμός Πληρωμών Ημεδαπής [1]</span></div>
<div class="c" style="left:404px;width:120px"><span class="t" style="transform:scaleX(0.940)">Κάρτα [2]</span></div>
<div class="c" style="left:524px;width:100px"></div>
<div class="c" style="left:624px;width:138px"><span class="t" style="transform:scaleX(0.917)">Πωλήσεις [1]</span></div>
<div class="c" style="left:762px;width:154px"><span class="t" style="transform:scaleX(0.896)">Είσπραξη Πιστωτικής Κάρτας [ΕΙΠ]</span></div>
<div class="c k" style="left:916px;width:54px"><svg class="cb" viewBox="0 0 11 13"><rect x="1.75" y="2.75" width="7.5" height="7.5" rx="1.3" fill="#fff" stroke="#8b8ca2" stroke-width="1.5"/><path d="M3.2 5.3 L5.7 8.3 L9.4 1.3" fill="none" stroke="#1c1c30" stroke-width="1.7"/></svg></div>
<div class="c k" style="left:970px;width:54px"><svg class="cb" viewBox="0 0 11 13"><rect x="1.75" y="2.75" width="7.5" height="7.5" rx="1.3" fill="#fff" stroke="#8b8ca2" stroke-width="1.5"/></svg></div>
<div class="c k" style="left:1024px;width:54px"><svg class="cb" viewBox="0 0 11 13"><rect x="1.75" y="2.75" width="7.5" height="7.5" rx="1.3" fill="#fff" stroke="#8b8ca2" stroke-width="1.5"/></svg></div>
<div class="c k" style="left:1078px;width:61px"><svg class="cb" viewBox="0 0 11 13"><rect x="1.75" y="2.75" width="7.5" height="7.5" rx="1.3" fill="#fff" stroke="#8b8ca2" stroke-width="1.5"/></svg></div>
<div class="c k" style="left:1139px;width:62px"><svg class="cb" viewBox="0 0 11 13"><rect x="1.75" y="2.75" width="7.5" height="7.5" rx="1.3" fill="#fff" stroke="#8b8ca2" stroke-width="1.5"/></svg></div>
<div class="c k" style="left:1201px;width:54px"><svg class="cb" viewBox="0 0 11 13"><rect x="1.75" y="2.75" width="7.5" height="7.5" rx="1.3" fill="#fff" stroke="#8b8ca2" stroke-width="1.5"/><rect x="4" y="5" width="3" height="3" fill="#1c1c30"/></svg></div>
<div class="c k" style="left:1255px;width:53px"><svg class="cb" viewBox="0 0 11 13"><rect x="1.75" y="2.75" width="7.5" height="7.5" rx="1.3" fill="#fff" stroke="#8b8ca2" stroke-width="1.5"/></svg></div>
<div class="c k" style="left:1308px;width:70px"><svg class="cb" viewBox="0 0 11 13"><rect x="1.75" y="2.75" width="7.5" height="7.5" rx="1.3" fill="#fff" stroke="#8b8ca2" stroke-width="1.5"/></svg></div>
<div class="c k" style="left:1378px;width:62px"><svg class="cb" viewBox="0 0 11 13"><rect x="1.75" y="2.75" width="7.5" height="7.5" rx="1.3" fill="#fff" stroke="#8b8ca2" stroke-width="1.5"/></svg></div>
</div>
<div class="sep"></div>
</div>
<div id="redbox"></div>
<div id="hscroll"><div id="thumb"></div>
<svg style="position:absolute;left:4px;top:4px" width="4" height="5" viewBox="0 0 4 5"><path d="M4 0 V5 L0 2.5 Z" fill="#8a8c9c"/></svg>
<svg style="position:absolute;left:1420px;top:4px" width="4" height="5" viewBox="0 0 4 5"><path d="M0 0 V5 L4 2.5 Z" fill="#8a8c9c"/></svg>
<div style="position:absolute;left:512px;top:4px;width:1px;height:5px;background:#d5d7e0"></div><div style="position:absolute;left:515px;top:4px;width:1px;height:5px;background:#d5d7e0"></div>
</div>
<div id="nav"><div class="tt"><span class="t" style="transform-origin:center center;transform:scaleX(0.899)">Εγγραφή 1 από 9</span></div><div class="n1"></div><div class="n2"></div>
<svg style="position:absolute;left:470px;top:10px" width="16" height="10" viewBox="0 0 16 10"><path d="M4 2 H5 V8 H4 Z" fill="#8e909a"/><path d="M8.4 2.4 V7.6 L5.7 5 Z M11.6 2.4 V7.6 L8.9 5 Z" fill="#787a84"/></svg>
<svg style="position:absolute;left:744px;top:10px" width="12" height="10" viewBox="0 0 12 10"><path d="M7 2.3 V7.7 L4 5 Z" fill="#80828c"/></svg>
<svg style="position:absolute;left:1015px;top:10px" width="12" height="10" viewBox="0 0 12 10"><path d="M4.8 2.3 V7.7 L7.7 5 Z" fill="#23253a"/></svg>
<svg style="position:absolute;left:1285px;top:10px" width="16" height="10" viewBox="0 0 16 10"><path d="M10 2 H11 V8 H10 Z" fill="#3a3c50"/><path d="M3.7 2.4 V7.6 L6.4 5 Z M6.8 2.4 V7.6 L9.5 5 Z" fill="#23253a"/></svg>
</div>
<div id="tb">
<div class="ib" style="left:4px"><svg width="33" height="27" viewBox="0 0 33 27"><rect x="4.9" y="5" width="24.8" height="15.7" rx="3" fill="#000"/><g fill="#ececea"><rect x="7.75" y="8.4" width="1.7" height="1.8"/><rect x="10.65" y="8.4" width="1.7" height="1.8"/><rect x="13.55" y="8.4" width="1.7" height="1.8"/><rect x="16.45" y="8.4" width="1.7" height="1.8"/><rect x="19.35" y="8.4" width="1.7" height="1.8"/><rect x="22.25" y="8.4" width="1.7" height="1.8"/><rect x="25.15" y="8.4" width="1.7" height="1.8"/><rect x="8.85" y="12" width="1.7" height="1.9"/><rect x="11.75" y="12" width="1.7" height="1.9"/><rect x="14.65" y="12" width="1.7" height="1.9"/><rect x="17.55" y="12" width="1.7" height="1.9"/><rect x="20.45" y="12" width="1.7" height="1.9"/><rect x="23.35" y="12" width="1.7" height="1.9"/><rect x="10.6" y="16" width="13.3" height="1.8"/></g></svg></div>
<div class="ib" style="left:40px"><svg width="33" height="27" viewBox="0 0 33 27"><path d="M23.4 6.5 L18.3 11.6" stroke="#111" stroke-width="3.7" stroke-linecap="round"/><path d="M18.6 11.3 L9.3 21.2" stroke="#111" stroke-width="1.6" stroke-linecap="round"/><circle cx="11.3" cy="9.6" r="3.5" fill="#111"/><path d="M11.5 10 L23.2 20.6" stroke="#111" stroke-width="3.3" stroke-linecap="round"/><path d="M7.2 4.6 L11.2 8.6" stroke="#ececea" stroke-width="3" stroke-linecap="butt"/><circle cx="22.9" cy="20.3" r="0.6" fill="#555"/></svg></div>
<div class="ib" style="left:75px"><svg width="33" height="27" viewBox="0 0 33 27"><path d="M8.2 3.9 H14.7 L18.6 7.5 V16.3 H8.2 Z" fill="#111"/><path d="M14.5 4.2 V7.9 H18.3" fill="none" stroke="#ececea" stroke-width="0.8"/><path d="M15.2 9.4 H21.5 L25.6 13.2 V21.9 H15.2 Z" fill="#0a0a0a" stroke="#ececea" stroke-width="1" paint-order="stroke"/><path d="M21.3 9.7 V13.5 H25.3" fill="none" stroke="#ececea" stroke-width="0.8"/></svg></div>
<div class="bb" style="left:970px"><span class="t" style="transform-origin:center center;transform:scaleX(0.952)">Αναζήτηση</span></div>
<div class="bb" style="left:1046px"><span class="t" style="transform-origin:center center;transform:scaleX(0.913)">Καθάρισμα</span></div>
<div class="bb" style="left:1122px"><span class="t" style="transform-origin:center center;transform:scaleX(0.893)">Νέο</span></div>
<div class="bb" style="left:1198px"><span class="t" style="transform-origin:center center;transform:scaleX(0.944)">Διαγραφή</span></div>
<div class="bb" style="left:1274px;width:74px"><span class="t" style="transform-origin:center center;transform:scaleX(0.916)">Αποθήκευση</span></div>
<div class="bb" style="left:1351px"><span class="t" style="transform-origin:center center;transform:scaleX(0.888)">Κλείσιμο</span></div>
</div>
<div id="botline"></div>
<div style="position:absolute;left:600px;top:606px;width:4px;height:4px;border-radius:2px;background:#f00"></div>

</body></html>
